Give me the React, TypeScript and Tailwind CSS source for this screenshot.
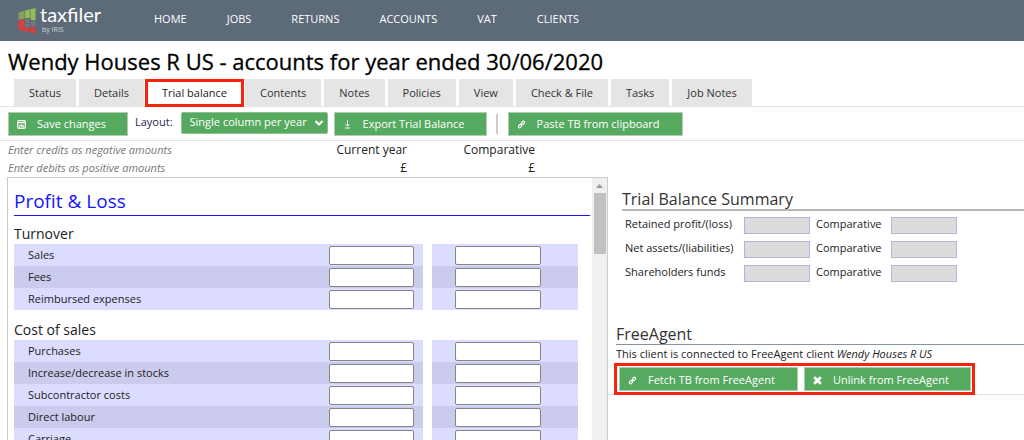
import type { ReactNode } from "react";

const navItems = ["HOME", "JOBS", "RETURNS", "ACCOUNTS", "VAT", "CLIENTS"];

const tabs = [
  "Status",
  "Details",
  "Trial balance",
  "Contents",
  "Notes",
  "Policies",
  "View",
  "Check & File",
  "Tasks",
  "Job Notes",
];

const sections = [
  { title: "Turnover", rows: ["Sales", "Fees", "Reimbursed expenses"] },
  {
    title: "Cost of sales",
    rows: ["Purchases", "Increase/decrease in stocks", "Subcontractor costs", "Direct labour", "Carriage"],
  },
];

const summaryRows = ["Retained profit/(loss)", "Net assets/(liabilities)", "Shareholders funds"];

function SaveIcon() {
  return (
    <svg viewBox="0 0 9 9" className="size-[9px]" fill="none" stroke="currentColor" aria-hidden="true">
      <rect x="0.7" y="0.7" width="7.6" height="7.6" rx="1.2" strokeWidth="1.2" />
      <path d="M1 2.6H8" strokeWidth="1.4" />
      <path d="M2.8 8V5.2H6.2V8M4.5 5.2V7" strokeWidth="1" />
    </svg>
  );
}

function ExportIcon() {
  return (
    <svg viewBox="0 0 9 9" className="size-[9px]" fill="none" stroke="currentColor" aria-hidden="true">
      <path d="M4.5 0.5V6M2.6 4.2L4.5 6.2L6.4 4.2M2 8H7" strokeWidth="1" />
    </svg>
  );
}

function LinkIcon() {
  return (
    <svg viewBox="0 0 9 9" className="size-[9px]" fill="none" stroke="currentColor" aria-hidden="true">
      <rect x="-1.9" y="-1.2" width="3.8" height="2.4" rx="1.2" transform="translate(6 2.9) rotate(-50)" strokeWidth="1.1" />
      <rect x="-1.9" y="-1.2" width="3.8" height="2.4" rx="1.2" transform="translate(3 6.1) rotate(-50)" strokeWidth="1.1" />
      <path d="M3.6 5.3L5.4 3.6" strokeWidth="1.1" />
    </svg>
  );
}

function CrossIcon() {
  return (
    <svg viewBox="0 0 9 9" className="size-[9px]" fill="none" stroke="currentColor" aria-hidden="true">
      <path d="M1.2 1.2L7.8 7.8M7.8 1.2L1.2 7.8" strokeWidth="2.8" />
    </svg>
  );
}

function GreenButton({ icon, className, children }: { icon: ReactNode; className: string; children: ReactNode }) {
  return (
    <button
      type="button"
      className={`flex h-6 shrink-0 items-center whitespace-nowrap border border-[#b5c9b7] bg-[#56aa60] pt-0.5 pl-2 text-[11px] text-white ${className}`}
    >
      {icon}
      {children}
    </button>
  );
}

function Logo() {
  return (
    <a href="#home" aria-label="taxfiler by IRIS" className="flex w-[146px] shrink-0 items-center gap-1 pl-[18px]">
      <svg viewBox="0 0 18 26" className="h-[26px] w-[18px]" aria-hidden="true">
        <path d="M0.5 4.5L7 2.6V10.5L0.5 11.5Z" fill="#86a35c" />
        <path d="M7 2.6L17.5 0V12.5L12.5 12.2V9.8L7 10.5Z" fill="#93bf55" />
        <path d="M0.5 12.2L6.5 11.6V19.2L12 20.4V18.6L17.5 19.4V25.5L0.5 21.8Z" fill="#d8413f" />
        <path d="M7.2 11.4L12 10.8V12.8L17.5 13.2V18.6L12 17.8V19.4L7.2 18.4Z" fill="#6f7984" />
        <path d="M7 2.6V11.4M12.2 1.4V24M12 12.6L17.5 12.9M6.8 15.2L12 15.6" fill="none" stroke="#4d5864" strokeWidth="0.5" />
      </svg>
      <span className="flex flex-col pb-1">
        <span className="font-[Lato] text-xl leading-[22px] text-white">taxfiler</span>
        <span className="pl-0.5 text-[7px] leading-[9px] text-[#d3d8dd]">by IRIS</span>
      </span>
    </a>
  );
}

export default function App() {
  return (
    <div className="flex h-screen flex-col overflow-hidden bg-white font-['Open_Sans','Noto_Sans',sans-serif] text-xs text-[#333]">
      <header className="flex h-[41px] shrink-0 items-center bg-[#5d6a78]">
        <Logo />
        <nav className="flex gap-10 pl-2 text-[11px] text-white">
          {navItems.map((item) => (
            <a key={item} href={`#${item.toLowerCase()}`} className="pb-0.5">
              {item}
            </a>
          ))}
        </nav>
      </header>

      <h1 className="shrink-0 whitespace-nowrap pt-1 pb-0.5 pl-2 text-[22px] leading-8 text-black [-webkit-text-stroke:0.3px_black]">
        Wendy Houses R US - accounts for year ended 30/06/2020
      </h1>

      <nav className="flex h-7 shrink-0 gap-[3px] border-b border-[#e4e4e4] pl-3.5 text-[11px]">
        {tabs.map((tab) =>
          tab === "Trial balance" ? (
            <a
              key={tab}
              href="#trial-balance"
              aria-current="page"
              className="-mx-0.5 -mb-px flex items-center whitespace-nowrap border-[3px] border-[#f9230b] bg-white px-3.5 text-[#222]"
            >
              {tab}
            </a>
          ) : (
            <a key={tab} href="#tab" className="flex items-center whitespace-nowrap bg-[#e5e5e5] px-[15px] pt-px">
              {tab}
            </a>
          ),
        )}
      </nav>

      <div className="flex h-[34px] shrink-0 items-center border-b border-[#e4e4e4] pl-2">
        <GreenButton icon={<SaveIcon />} className="w-[120px] gap-[11px]">
          Save changes
        </GreenButton>
        <label htmlFor="layout" className="pr-2 pb-0.5 pl-[7px] text-[11px] text-[#1f1f4d]">
          Layout:
        </label>
        <span className="grid items-center pb-0.5">
          <select
            id="layout"
            className="col-start-1 row-start-1 h-[22px] w-[147px] appearance-none rounded-xs border border-[#8fbf95] bg-[#56aa60] pl-2 text-[11px] text-white"
          >
            <option>Single column per year</option>
          </select>
          <svg viewBox="0 0 10 8" className="pointer-events-none col-start-1 row-start-1 mr-1 h-2 w-2.5 justify-self-end" aria-hidden="true">
            <path d="M1.5 2L5 5.5L8.5 2" fill="none" stroke="white" strokeWidth="2" />
          </svg>
        </span>
        <GreenButton icon={<ExportIcon />} className="ml-1.5 w-[153px] gap-[11px]">
          Export Trial Balance
        </GreenButton>
        <span className="mr-2.5 ml-[9px] h-5 w-0.5 shrink-0 bg-[#ccc]" />
        <GreenButton icon={<LinkIcon />} className="w-[175px] gap-[11px]">
          Paste TB from clipboard
        </GreenButton>
      </div>

      <div className="grid min-h-0 flex-1 grid-cols-[608fr_416fr]">
        <div className="flex min-h-0 flex-col">
          <table className="w-[535px] shrink-0 table-fixed text-[#222]">
            <colgroup>
              <col />
              <col className="w-[120px]" />
              <col className="w-32" />
            </colgroup>
            <tbody>
              <tr className="h-[18px]">
                <td className="p-0 pl-2 text-[11px] leading-[18px] text-[#777] italic">Enter credits as negative amounts</td>
                <th className="p-0 text-right leading-[18px] font-normal">Current year</th>
                <th className="p-0 text-right leading-[18px] font-normal">Comparative</th>
              </tr>
              <tr className="h-[18px]">
                <td className="p-0 pl-2 text-[11px] leading-[18px] text-[#777] italic">Enter debits as positive amounts</td>
                <td className="p-0 text-right leading-[18px]">£</td>
                <td className="p-0 text-right leading-[18px]">£</td>
              </tr>
            </tbody>
          </table>

          <div className="ml-[7px] flex min-h-0 flex-1 overflow-hidden border border-b-0 border-[#ccc]">
            <div className="min-w-0 flex-1 pr-0.5 pl-1.5">
              <h2 className="border-b border-[#1414ff] pt-2.5 text-[19px] leading-[27px] text-[#1414ff]">Profit &amp; Loss</h2>
              {sections.map((section) => (
                <section key={section.title} className="pb-0.5">
                  <h3 className="pt-2 text-sm leading-5 text-[#222]">{section.title}</h3>
                  <table className="w-[564px]">
                    <tbody>
                      {section.rows.map((row, index) => {
                        const shade = index % 2 === 0 ? "bg-[#dcdcff]" : "bg-[#cbcbed]";
                        return (
                          <tr key={row} className="h-[22px]">
                            <td className={`p-0 pl-3.5 text-[11px] leading-5 text-[#222] ${shade}`}>{row}</td>
                            <td className={`w-[94px] p-0 ${shade}`}>
                              <input
                                aria-label={`${row} current year`}
                                className="block h-[19px] w-[85px] rounded-xs border border-[#858585] bg-white px-1 text-right"
                              />
                            </td>
                            <td className="w-[9px] p-0" />
                            <td className={`w-[146px] p-0 pl-[23px] ${shade}`}>
                              <input
                                aria-label={`${row} comparative`}
                                className="block h-[19px] w-[86px] rounded-xs border border-[#858585] bg-white px-1 text-right"
                              />
                            </td>
                          </tr>
                        );
                      })}
                    </tbody>
                  </table>
                </section>
              ))}
            </div>
            <div className="flex w-[15px] shrink-0 flex-col items-center bg-[#f0f0f0]" aria-hidden="true">
              <svg viewBox="0 0 15 15" className="size-[15px]">
                <path d="M4 10L7.5 6L11 10Z" fill="#9c9c9c" />
              </svg>
              <span className="h-[61px] w-3 bg-[#c1c1c1]" />
            </div>
          </div>
        </div>

        <aside className="min-w-0 pt-12">
          <section className="pl-3.5">
            <h2 className="border-b-2 border-[#b1b9bf] text-base leading-5">Trial Balance Summary</h2>
            <div className="flex flex-col gap-[7px] pt-1.5 pl-[3px] text-[11px] text-[#222]">
              {summaryRows.map((row, index) => (
                <div key={row} className="flex h-[17px] items-center">
                  <label htmlFor={`summary-${index}`} className="w-[119px] pb-0.5">
                    {row}
                  </label>
                  <input id={`summary-${index}`} readOnly className="h-[17px] w-[66px] border border-[#b3b3dc] bg-[#dcdcdc] px-1" />
                  <label htmlFor={`comparative-${index}`} className="w-[81px] pb-0.5 pl-1.5">
                    Comparative
                  </label>
                  <input id={`comparative-${index}`} readOnly className="h-[17px] w-[66px] border border-[#b3b3dc] bg-[#dcdcdc] px-1" />
                </div>
              ))}
            </div>
          </section>

          <section className="mt-[42px] border-b border-[#e4e4e4] pl-2">
            <h2 className="border-b border-[#8795a0] text-base leading-5">FreeAgent</h2>
            <p className="text-[11px] leading-[18px] text-[#222]">
              This client is connected to FreeAgent client <em>Wendy Houses R US</em>
            </p>
            <div className="-mb-px -ml-0.5 flex w-[361px] gap-1.5 border-[3px] border-[#f9230b] bg-white px-0.5 py-px">
              <GreenButton icon={<LinkIcon />} className="w-[179px] gap-[11px]">
                Fetch TB from FreeAgent
              </GreenButton>
              <GreenButton icon={<CrossIcon />} className="w-[167px] gap-[11px]">
                Unlink from FreeAgent
              </GreenButton>
            </div>
          </section>
        </aside>
      </div>
    </div>
  );
}
